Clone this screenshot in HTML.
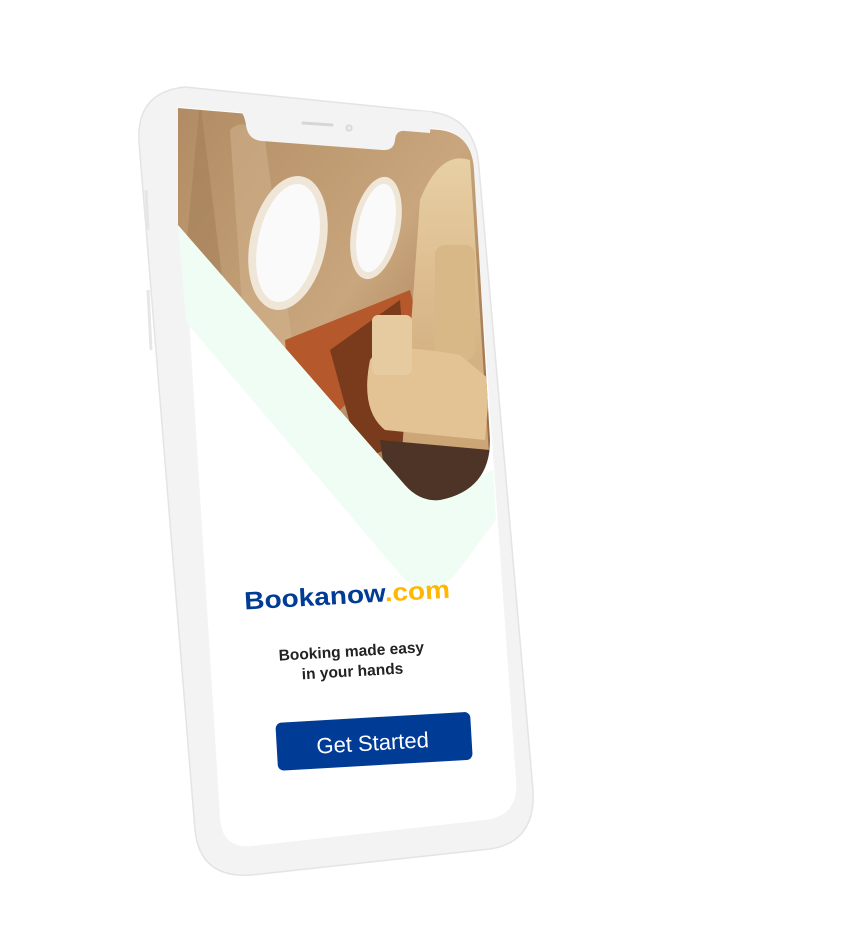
<!DOCTYPE html>
<html><head><meta charset="utf-8"><style>
html,body{margin:0;padding:0;background:#fff;width:862px;height:934px;overflow:hidden}
svg{display:block}
</style></head><body>
<svg width="862" height="934" viewBox="0 0 862 934" xmlns="http://www.w3.org/2000/svg">
<defs>
<linearGradient id="bg" x1="0" y1="0" x2="1" y2="1">
<stop offset="0" stop-color="#b08a62"/><stop offset="0.5" stop-color="#c9a67d"/><stop offset="1" stop-color="#8a5a35"/>
</linearGradient>
<linearGradient id="seat" x1="0" y1="0" x2="0" y2="1">
<stop offset="0" stop-color="#e8cfa4"/><stop offset="1" stop-color="#c9a070"/>
</linearGradient>
<clipPath id="photo">
<path d="M178,108 L440,130 Q472,134 474,170 L490,440 Q490,490 440,500 Q420,502 405,485 L178,225 Z"/>
</clipPath>
</defs>
<path d="M185,87 L432,112 Q476,118 479,168 L533,790 Q536,842 490,849 L252,875 Q200,879 195,830 L139,142 Q136,92 185,87 Z" fill="#f3f3f3" stroke="#e4e4e4" stroke-width="1.5"/>
<path d="M146,190 L148,230 M148,290 L151,350" stroke="#e6e6e6" stroke-width="3"/>
<path d="M178,107 L440,129 Q471,133 473,170 L516,780 Q519,816 485,820 L252,846 Q222,849 220,818 L178,140 Z" fill="#fff"/>
<path d="M178,225 L405,485 Q430,505 470,480 L493,470 L496,520 L455,575 Q430,600 405,580 L186,322 Z" fill="#effdf4"/>
<g clip-path="url(#photo)">
<rect x="170" y="100" width="330" height="420" fill="url(#bg)"/>
<path d="M200,100 L240,420 L170,420 Z" fill="#a07b55" opacity="0.5"/>
<path d="M230,130 Q245,115 265,140 L300,400 L250,420 Z" fill="#d4b690" opacity="0.5"/>
<ellipse cx="288" cy="243" rx="38" ry="68" transform="rotate(12 288 243)" fill="#efe6d8"/>
<ellipse cx="288" cy="243" rx="30" ry="60" transform="rotate(12 288 243)" fill="#fafafa"/>
<ellipse cx="376" cy="228" rx="24" ry="52" transform="rotate(12 376 228)" fill="#efe6d8"/>
<ellipse cx="376" cy="228" rx="18" ry="45" transform="rotate(12 376 228)" fill="#fafafa"/>
<path d="M285,340 L410,290 L420,330 L330,420 L290,400 Z" fill="#b5582c"/>
<path d="M330,350 L400,300 L410,440 L360,460 Z" fill="#7a3a1c"/>
<path d="M420,200 Q440,150 470,160 L490,470 L400,480 Z" fill="url(#seat)"/>
<rect x="435" y="245" width="40" height="115" rx="10" fill="#d9b888"/>
<path d="M370,360 Q380,340 460,355 L490,380 L485,440 L385,430 Q360,410 370,360 Z" fill="#e3c294"/>
<rect x="372" y="315" width="40" height="60" rx="6" fill="#e6cba0"/>
<path d="M380,440 L490,450 L490,510 L390,510 Z" fill="#4d3426"/>
</g>
<path d="M238,110 Q244,112 246,125 Q248,140 262,141 L382,150 Q394,151 395,140 Q396,130 405,131 L430,133 L432,112 L236,100 Z" fill="#f3f3f3"/>
<path d="M303,123 L332,125" stroke="#d6d6d6" stroke-width="3" stroke-linecap="round"/>
<circle cx="349" cy="128" r="3" fill="#e8e8e8" stroke="#d0d0d0"/>
<g transform="rotate(-3.3 360 680)" font-family="'Liberation Sans',sans-serif" font-weight="bold">
<text x="249" y="603" font-size="25" fill="#003b95" textLength="206" lengthAdjust="spacingAndGlyphs">Bookanow<tspan fill="#ffb700">.com</tspan></text>
<text x="353" y="656" font-size="15.5" fill="#222" text-anchor="middle">Booking made easy</text>
<text x="353" y="676" font-size="15.5" fill="#222" text-anchor="middle">in your hands</text>
<rect x="273" y="718" width="195" height="48" rx="6" fill="#003b95"/>
<text x="369" y="751" font-size="22" font-weight="normal" fill="#fff" text-anchor="middle">Get Started</text>
</g>
</svg>
</body></html>
